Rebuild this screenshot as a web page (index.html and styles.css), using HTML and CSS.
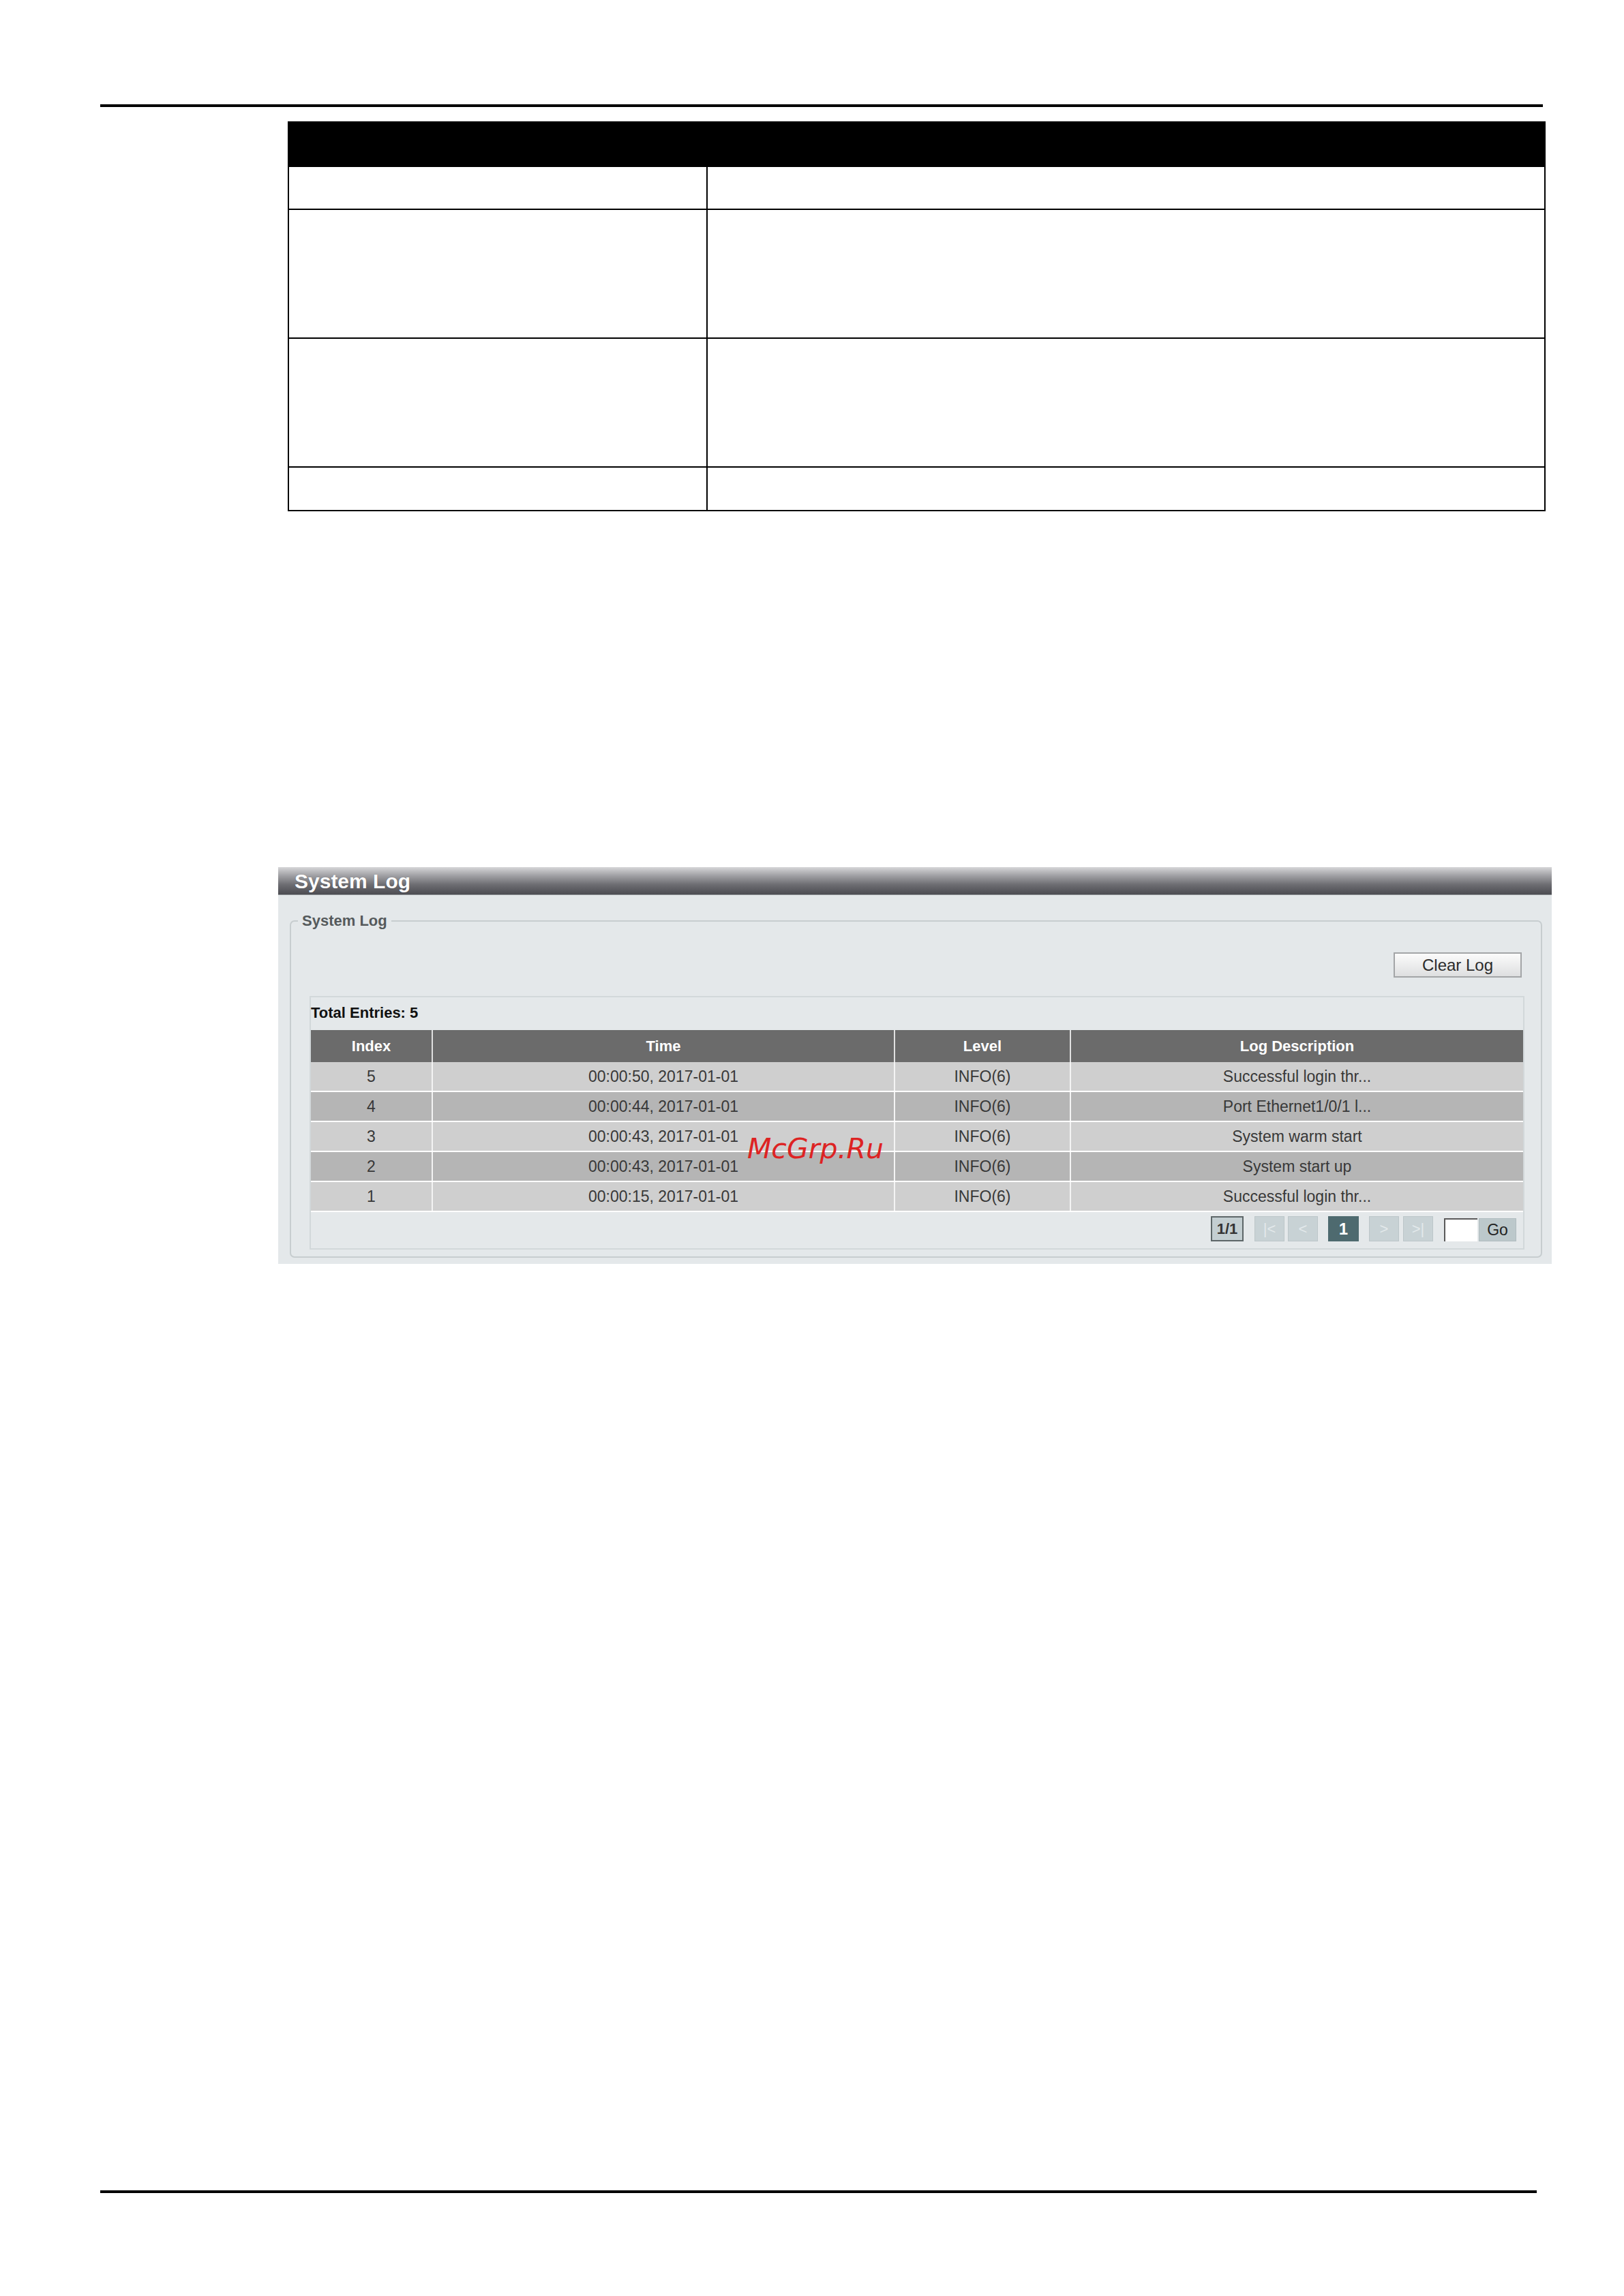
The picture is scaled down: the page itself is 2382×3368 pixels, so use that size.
FILE: index.html
```html
<!DOCTYPE html>
<html lang="en">
<head>
<meta charset="utf-8">
<title>System Log</title>
<link rel="stylesheet" href="styles.css">
</head>
<body>
<div class="rule rule-top"></div>

<div class="spec">
  <div class="spec-head"></div>
  <div class="spec-row r1"><div class="spec-l"></div><div class="spec-r"></div></div>
  <div class="spec-row r2"><div class="spec-l"></div><div class="spec-r"></div></div>
  <div class="spec-row r3"><div class="spec-l"></div><div class="spec-r"></div></div>
  <div class="spec-row r4"><div class="spec-l"></div><div class="spec-r"></div></div>
</div>

<div class="sys">
  <div class="sys-head">System Log</div>
  <div class="sys-body">
    <fieldset class="fs">
      <legend class="fs-legend">System Log</legend>
      <div class="fs-inner">
        <div class="actions"><button class="btn-clear" type="button">Clear Log</button></div>
        <div class="box">
          <div class="total">Total Entries: 5</div>
          <div class="log">
            <div class="log-row log-head">
              <div class="c">Index</div><div class="c">Time</div><div class="c">Level</div><div class="c">Log Description</div>
            </div>
            <div class="log-row odd">
              <div class="c">5</div><div class="c">00:00:50, 2017-01-01</div><div class="c">INFO(6)</div><div class="c">Successful login thr...</div>
            </div>
            <div class="log-row even">
              <div class="c">4</div><div class="c">00:00:44, 2017-01-01</div><div class="c">INFO(6)</div><div class="c">Port Ethernet1/0/1 l...</div>
            </div>
            <div class="log-row odd">
              <div class="c">3</div><div class="c">00:00:43, 2017-01-01</div><div class="c">INFO(6)</div><div class="c">System warm start</div>
            </div>
            <div class="log-row even">
              <div class="c">2</div><div class="c">00:00:43, 2017-01-01</div><div class="c">INFO(6)</div><div class="c">System start up</div>
            </div>
            <div class="log-row odd">
              <div class="c">1</div><div class="c">00:00:15, 2017-01-01</div><div class="c">INFO(6)</div><div class="c">Successful login thr...</div>
            </div>
          </div>
          <div class="pager">
            <span class="pg-info">1/1</span>
            <span class="pg-btn pg-first">|&lt;</span>
            <span class="pg-btn pg-prev">&lt;</span>
            <span class="pg-cur">1</span>
            <span class="pg-btn pg-next">&gt;</span>
            <span class="pg-btn pg-last">&gt;|</span>
            <span class="pg-input"></span>
            <span class="pg-go">Go</span>
          </div>
        </div>
      </div>
    </fieldset>
  </div>
</div>

<div class="rule rule-bottom"></div>

<div class="watermark">McGrp.Ru</div>
</body>
</html>
```

FILE: styles.css
```css
html, body {
  margin: 0;
  padding: 0;
  background: #ffffff;
}
body {
  font-family: "Liberation Sans", Arial, sans-serif;
  color: #000;
  position: relative;
  min-height: 3368px;
}

/* horizontal page rules */
.rule {
  background: #000;
  height: 4px;
}
.rule-top {
  margin: 153px 0 0 147px;
  width: 2116px;
}
.rule-bottom {
  margin: 1359px 0 0 147px;
  width: 2107px;
}

/* empty spec table */
.spec {
  box-sizing: border-box;
  width: 1845px;
  margin: 21px 0 0 422px;
  border: 2px solid #000;
  border-bottom: none;
}
.spec-head {
  height: 65px;
  background: #000;
}
.spec-row {
  display: grid;
  grid-template-columns: 614px 1fr;
  border-bottom: 2px solid #000;
}
.spec-l {
  border-right: 2px solid #000;
}
.r1 { height: 61px; }
.r2 { height: 187px; }
.r3 { height: 187px; }
.r4 { height: 62px; }

/* System Log panel */
.sys {
  margin: 522px 0 0 408px;
  width: 1868px;
}
.sys-head {
  height: 40px;
  border-bottom: 1px solid #8d9194;
  background: linear-gradient(to bottom, #d6d6d8 0%, #a2a2a6 30%, #6c6c71 65%, #4c4c52 100%);
  color: #ffffff;
  font-weight: bold;
  font-size: 30px;
  line-height: 41px;
  padding-left: 24px;
  text-shadow: 0 0 1px rgba(0,0,0,0.4);
}
.sys-body {
  background: #e4e8ea;
  padding: 25px 14px 9px 17px;
}
.fs {
  margin: 0;
  padding: 0;
  min-width: 0;
  border: 2px solid #c7cdcf;
  border-radius: 7px;
}
.fs-legend {
  margin-left: 10px;
  padding: 0 6px;
  font-weight: bold;
  font-size: 22px;
  line-height: 26px;
  color: #555a5c;
}
.fs-inner {
  padding: 33px 24px 10px 27px;
}
.actions {
  display: flex;
  justify-content: flex-end;
  padding-right: 4px;
}
.btn-clear {
  box-sizing: border-box;
  width: 188px;
  height: 37px;
  margin: 0;
  padding: 0;
  border: 2px solid #a3a5a7;
  background: linear-gradient(to bottom, #fbfbfb, #dedfe0);
  font-family: "Liberation Sans", Arial, sans-serif;
  font-size: 24px;
  color: #2b2b2b;
}

.box {
  margin-top: 27px;
  border: 2px solid #d2d8da;
}
.total {
  height: 48px;
  line-height: 46px;
  font-weight: bold;
  font-size: 22px;
  color: #111;
}
.log-row {
  display: grid;
  grid-template-columns: 177px 678px 258px 1fr;
}
.log-row .c {
  text-align: center;
  white-space: nowrap;
  overflow: hidden;
}
.log-row .c + .c {
  border-left: 2px solid #f4f4f4;
}
.log-head {
  height: 47px;
  background: #6b6b6b;
}
.log-head .c {
  color: #ffffff;
  font-weight: bold;
  font-size: 22px;
  line-height: 47px;
}
.log-head .c + .c {
  border-left-color: #e0e0e0;
}
.odd, .even {
  height: 42px;
  border-bottom: 2px solid #ffffff;
}
.odd { background: #cfcfcf; }
.even { background: #b5b5b5; }
.odd .c, .even .c {
  color: #383838;
  font-size: 23px;
  line-height: 42px;
}

.pager {
  display: flex;
  justify-content: flex-end;
  align-items: flex-start;
  padding: 6px 10px 10px 0;
}
.pager span {
  box-sizing: border-box;
  display: flex;
  align-items: center;
  justify-content: center;
}
.pg-info {
  width: 48px;
  height: 37px;
  background: #c3ced1;
  border: 2px solid #5d6668;
  font-weight: bold;
  font-size: 22px;
  color: #333;
}
.pg-btn {
  width: 44px;
  height: 37px;
  background: #c8d2d5;
  border: 1px solid #bcc6c9;
  color: #e3e9eb;
  font-size: 22px;
}
.pg-first { margin-left: 16px; }
.pg-prev { margin-left: 5px; }
.pg-next { margin-left: 15px; }
.pg-last { margin-left: 6px; }
.pg-cur {
  width: 45px;
  height: 37px;
  margin-left: 15px;
  background: #4e6a6f;
  color: #ffffff;
  font-weight: bold;
  font-size: 24px;
}
.pg-input {
  width: 49px;
  height: 34px;
  margin: 3px 0 0 16px;
  background: #ffffff;
  border-top: 2px solid #5a5a5a;
  border-left: 2px solid #5a5a5a;
}
.pg-go {
  width: 55px;
  height: 34px;
  margin: 3px 0 0 2px;
  background: #bcc8cb;
  border: 1px solid #b0bcbf;
  color: #222;
  font-size: 23px;
}

.watermark {
  position: absolute;
  left: 1096px;
  top: 1665px;
  font-family: "DejaVu Sans", sans-serif;
  font-style: oblique;
  font-size: 41px;
  line-height: 41px;
  color: #dd2323;
}
```
